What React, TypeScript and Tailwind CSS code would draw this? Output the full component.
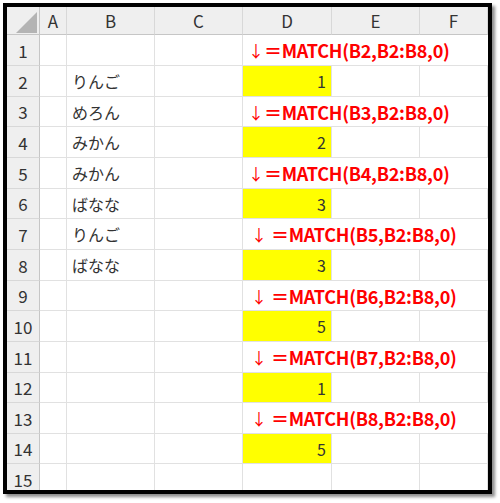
const COLS = ['A', 'B', 'C', 'D', 'E', 'F'];

const HEIGHTS = ['h-[31px]', 'h-[31px]', 'h-[30px]', 'h-[31px]', 'h-[31px]', 'h-[30px]', 'h-[31px]', 'h-[31px]', 'h-[30px]', 'h-[31px]', 'h-[31px]', 'h-[30px]', 'h-[31px]', 'h-[30px]', 'h-[31px]'];

type Row =
  | { kind: 'formula'; fruit?: string; ref: string; gap: boolean }
  | { kind: 'value'; fruit?: string; value?: number };

const ROWS: Row[] = [
  { kind: 'formula', ref: 'B2', gap: false },
  { kind: 'value', fruit: 'りんご', value: 1 },
  { kind: 'formula', fruit: 'めろん', ref: 'B3', gap: false },
  { kind: 'value', fruit: 'みかん', value: 2 },
  { kind: 'formula', fruit: 'みかん', ref: 'B4', gap: false },
  { kind: 'value', fruit: 'ばなな', value: 3 },
  { kind: 'formula', fruit: 'りんご', ref: 'B5', gap: true },
  { kind: 'value', fruit: 'ばなな', value: 3 },
  { kind: 'formula', ref: 'B6', gap: true },
  { kind: 'value', value: 5 },
  { kind: 'formula', ref: 'B7', gap: true },
  { kind: 'value', value: 1 },
  { kind: 'formula', ref: 'B8', gap: true },
  { kind: 'value', value: 5 },
  { kind: 'value' },
];

const cell = 'border-r border-b border-[#e1e1e1]';

export default function App() {
  return (
    <div className="w-[500px] h-[503px] bg-white p-[3px] font-['Noto_Sans_CJK_JP','Noto_Sans',sans-serif]">
      <div className="w-[489px] h-[491px] border-4 border-black shadow-[3px_3px_3px_rgba(0,0,0,0.45)] overflow-hidden bg-white">
        {/* column headers */}
        <div className="grid grid-cols-[33px_27px_88px_88px_89px_88px_68px] h-[28px] bg-[#efefef] text-[17px] text-[#333]">
          <div className="relative border-r border-b border-[#c6c6c6]">
            <svg className="absolute left-[9px] top-[5px]" width="21" height="21" viewBox="0 0 21 21">
              <polygon points="21,0 21,21 0,21" fill="#b4b4b4" />
            </svg>
          </div>
          {COLS.map((c) => (
            <div key={c} className="flex items-center justify-center border-r border-b border-r-[#d8d8d8] border-b-[#c6c6c6] leading-none">
              {c}
            </div>
          ))}
        </div>

        {ROWS.map((row, i) => (
          <div key={i} className={`grid grid-cols-[33px_27px_88px_88px_89px_88px_68px] ${HEIGHTS[i]}`}>
            <div className="flex items-center justify-center bg-[#efefef] border-r border-b border-r-[#c6c6c6] border-b-[#d8d8d8] text-[17px] text-[#333] leading-none">
              {i + 1}
            </div>
            <div className={cell} />
            <div className={`${cell} flex items-center pl-[5px] text-[16px] text-[#333] leading-none`}>
              {row.fruit}
            </div>
            <div className={cell} />
            {row.kind === 'formula' ? (
              <div className="col-span-3 flex items-center border-b border-[#e1e1e1] whitespace-nowrap text-[#ff0000] leading-none">
                <span className={`text-[16px] font-normal ${row.gap ? 'pl-[8px] mr-[4px]' : 'pl-[5px]'}`}>↓</span>
                <span className="text-[18px] font-bold tracking-[-0.25px]">
                  ＝MATCH({row.ref},B2:B8,0)
                </span>
              </div>
            ) : (
              <>
                <div
                  className={`${cell} flex items-center justify-end pr-[5px] text-[16px] text-[#333] leading-none ${
                    row.value !== undefined ? 'bg-[#ffff00]' : ''
                  }`}
                >
                  {row.value}
                </div>
                <div className={cell} />
                <div className={cell} />
              </>
            )}
          </div>
        ))}
      </div>
    </div>
  );
}
